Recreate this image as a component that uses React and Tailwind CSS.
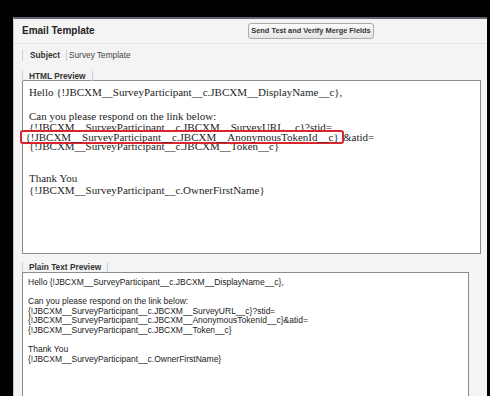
import React from 'react';

const P = 'JBCXM__SurveyParticipant__c';

const plainLines = [
    `Hello {!${P}.JBCXM__DisplayName__c},`,
    '',
    'Can you please respond on the link below:',
    `{!${P}.JBCXM__SurveyURL__c}?stid=`,
    `{!${P}.JBCXM__AnonymousTokenId__c}&atid=`,
    `{!${P}.JBCXM__Token__c}`,
    '',
    'Thank You',
    `{!${P}.OwnerFirstName}`,
];

const Tab = ({ children }) => (
    <div className="flex shrink-0">
        <div className="border-l border-r border-[#cfcfcf] pl-[6px] pr-[6px] h-[10px] flex items-center text-[8.3px] font-bold text-[#333]">
            {children}
        </div>
    </div>
);

const App = () => {
    return (
        <div className="w-[490px] h-[396px] bg-black overflow-hidden flex flex-col font-['Liberation_Sans',Arial,sans-serif]">
            {/* Card */}
            <div className="mt-[17px] ml-[13px] w-[474px] shrink-0 bg-[#f4f4f4] border-t-2 border-t-[#5f6672] border-l border-l-[#c8c8c8] flex flex-col">
                {/* Header */}
                <div className="h-[25px] shrink-0 flex flex-row items-center border-b border-[#e3e3e3] pl-[8px]">
                    <div className="w-[226px] shrink-0 text-[10px] leading-[14px] font-bold text-[#222]">Email Template</div>
                    <div className="h-[16px] w-[126px] shrink-0 flex items-center justify-center text-[7.4px] font-bold text-[#333] bg-[linear-gradient(#fbfbfb,#e4e4e4)] border border-[#ababab] rounded-[3px] whitespace-nowrap">
                        Send Test and Verify Merge Fields
                    </div>
                </div>

                {/* Subject */}
                <div className="flex items-center pl-[8px] mt-[6px] h-[11px] shrink-0 text-[8.3px]">
                    <div className="border-l border-[#cfcfcf] pl-[7px] pr-[6px] font-bold text-[#333] h-[11px] flex items-center">Subject</div>
                    <div className="border-l border-[#cfcfcf] pl-[2px] text-[#444] h-[11px] flex items-center">Survey Template</div>
                </div>

                {/* HTML Preview */}
                <div className="pl-[8px] mt-[10px] shrink-0">
                    <Tab>HTML Preview</Tab>
                    <div className="w-[459px] h-[174px] bg-white border border-[#8c8c8c] mt-[-1px] pl-[6px] pt-[5px] font-['Liberation_Serif','Times_New_Roman',serif] text-[11px] text-[#1e1e1e] whitespace-nowrap">
                        <div className="h-[12px] leading-[12px]">Hello {`{!${P}.JBCXM__DisplayName__c},`}</div>
                        <div className="h-[12px]"></div>
                        <div className="h-[12px] leading-[12px]">Can you please respond on the link below:</div>
                        <div className="h-[10px] leading-[10px]">{`{!${P}.JBCXM__SurveyURL__c}?stid=`}</div>
                        {/* highlighted line */}
                        <div className="h-[9px] flex items-center relative z-10">
                            <div className="ml-[-9px] h-[14px] w-[324px] border-[2.5px] border-[#d8262c] rounded-[3px] bg-white pl-[3.5px] flex items-center leading-[10px]">
                                {`{!${P}.JBCXM__AnonymousTokenId__c}`}
                            </div>
                            <span className="ml-[-1px] leading-[10px]">&amp;atid=</span>
                        </div>
                        <div className="h-[10px] leading-[10px]">{`{!${P}.JBCXM__Token__c}`}</div>
                        <div className="h-[21px]"></div>
                        <div className="h-[12px] leading-[12px]">Thank You</div>
                        <div className="h-[12px] leading-[12px]">{`{!${P}.OwnerFirstName}`}</div>
                    </div>
                </div>

                {/* Plain Text Preview */}
                <div className="pl-[8px] mt-[8px] shrink-0">
                    <Tab>Plain Text Preview</Tab>
                    <div className="w-[447px] h-[130px] bg-white border border-[#8c8c8c] pl-[5px] pt-[5px] text-[8.5px] leading-[9.6px] text-[#222]">
                        {plainLines.map((l, i) => (
                            <div key={i} className="h-[9.6px] whitespace-nowrap">{l}</div>
                        ))}
                    </div>
                </div>
            </div>
        </div>
    );
};

export default App;
